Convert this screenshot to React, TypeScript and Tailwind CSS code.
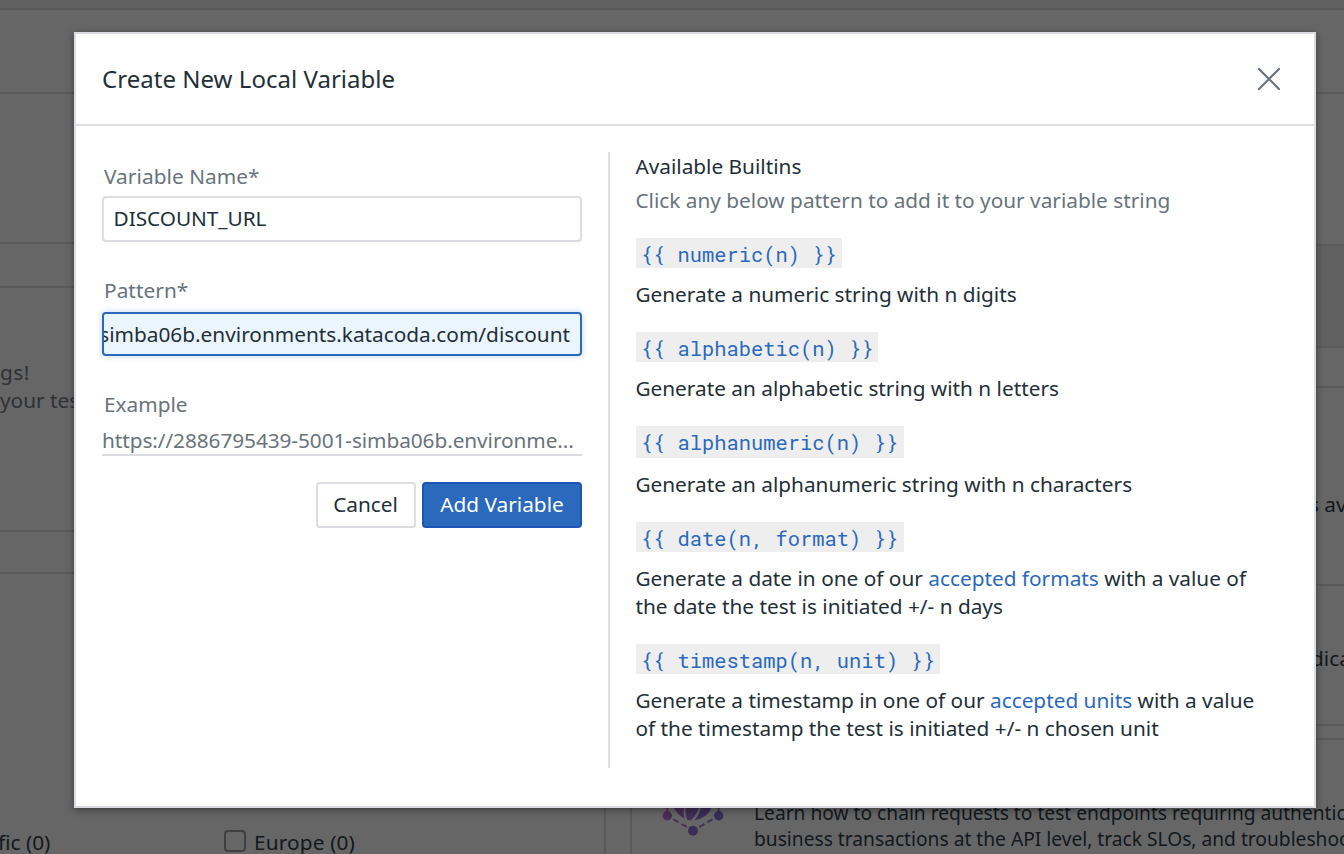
import type { ReactNode } from "react";

function Link({ children }: { children: ReactNode }) {
  return <a href="#" className="text-[#2a69bc]">{children}</a>;
}

const builtins: { pattern: string; text: ReactNode; row: string; tag: string }[] = [
  { pattern: "{{ numeric(n) }}", text: "Generate a numeric string with n digits", row: "h-[94px]", tag: "w-[206px] h-[30px]" },
  { pattern: "{{ alphabetic(n) }}", text: "Generate an alphabetic string with n letters", row: "h-[94px]", tag: "w-[242px] h-[30px]" },
  { pattern: "{{ alphanumeric(n) }}", text: "Generate an alphanumeric string with n characters", row: "h-24", tag: "w-[268px] h-8" },
  {
    pattern: "{{ date(n, format) }}",
    text: <>Generate a date in one of our <Link>accepted formats</Link> with a value of<br />the date the test is initiated +/- n days</>,
    row: "h-[122px]",
    tag: "w-[268px] h-[30px]",
  },
  {
    pattern: "{{ timestamp(n, unit) }}",
    text: <>Generate a timestamp in one of our <Link>accepted units</Link> with a value<br />of the timestamp the test is initiated +/- n chosen unit</>,
    row: "h-[122px]",
    tag: "w-[304px] h-[30px]",
  },
];

function Backdrop() {
  return (
    <div className="flex h-full flex-col text-[#12181c]">
      <div className="h-[10px] shrink-0 border-b-2 border-[#595959] bg-[#616161]" />
      <div className="h-[84px] shrink-0 border-b-2 border-[#595959]" />
      <div className="flex min-h-0 flex-1">
        <div className="flex w-[606px] shrink-0 flex-col overflow-hidden border-r-2 border-[#595959]">
          <div className="h-[150px] shrink-0 border-b-2 border-[#595959]" />
          <div className="h-11 shrink-0 border-b-2 border-[#595959]" />
          <div className="h-[244px] shrink-0 border-b-2 border-[#595959] pt-[70px] leading-7 text-[#2e3134]">
            <p className="tracking-[0.5px]">gs!</p>
            <p>your tests</p>
          </div>
          <div className="h-[42px] shrink-0 border-b-2 border-[#595959]" />
          <div className="flex pt-[254px] leading-7">
            <p className="-ml-[2px] w-[226px] shrink-0 whitespace-nowrap">fic (0)</p>
            <div className="mt-[2px] mr-2 size-[22px] rounded border-2 border-[#404040]" />
            <p className="tracking-[0.15px]">Europe (0)</p>
          </div>
        </div>
        <div className="ml-6 flex min-w-0 flex-1 flex-col overflow-hidden border-l-2 border-[#595959] whitespace-nowrap">
          <div className="h-[150px] shrink-0" />
          <div className="h-[104px] shrink-0 border-y-2 border-[#5c5c5c] bg-[#616161]" />
          <div className="h-10 shrink-0 border-b-2 border-[#595959]" />
          <div className="h-[198px] shrink-0 border-b-2 border-[#595959] pt-[102px] pl-[677px] leading-7">s available</div>
          <div className="h-[140px] shrink-0 border-b-2 border-[#595959] pt-[58px] pl-[679px] leading-7">dicated</div>
          <div className="h-[14px] shrink-0 border-b-2 border-[#595959]" />
          <div className="flex pt-[26px] pl-[28px]">
            <svg className="shrink-0" width="66" height="72" viewBox="0 0 66 72">
              <defs>
                <linearGradient id="bulb" gradientUnits="userSpaceOnUse" x1="7" y1="0" x2="59" y2="0">
                  <stop offset="0" stopColor="#4b2d55" />
                  <stop offset="1" stopColor="#372e58" />
                </linearGradient>
              </defs>
              <path
                fill="url(#bulb)"
                d="M24 42Q23 48 24.500 52.500Q17 49 13 40Q9 26 25 16ZM25.500 42Q25 49 27.500 54L31 54.200Q37 49 39.500 40L38 16H27ZM41.500 40Q39 49 34.500 54Q47 53 52.500 40Q56 26 40 16Z"
              />
              <g fill="none" stroke="url(#bulb)" strokeWidth="1.800">
                <path d="M7.300 18Q7.500 34 7.300 49.700" />
                <path d="M58.600 18Q58.800 34 58.600 49.700" />
                <path d="M7.300 49.700L33 64.700" strokeDasharray="6 3.500" strokeDashoffset="-7" />
                <path d="M58.600 49.700L33 64.700" strokeDasharray="6 3.500" strokeDashoffset="-7" />
              </g>
              <circle cx="7.300" cy="49.700" r="4.700" fill="#4b2d55" />
              <circle cx="58.700" cy="49.700" r="4.700" fill="#372e58" />
              <circle cx="33" cy="64.700" r="4.900" fill="#3a2e59" />
            </svg>
            <p className="ml-[28px] pt-[34px] text-[19.2px] leading-[26px]">
              Learn how to chain requests to test endpoints requiring authentication
              <br />
              business transactions at the API level, track SLOs, and troubleshoot
            </p>
          </div>
        </div>
      </div>
    </div>
  );
}

export default function App() {
  return (
    <div className="relative h-[854px] w-[1344px] overflow-hidden bg-[#666] font-['Noto_Sans',sans-serif] text-[20.8px]">
      <Backdrop />
      <div className="absolute top-8 left-[74px] flex h-[776px] w-[1242px] flex-col border-2 border-[#dcdce3] bg-white text-[#232f38] shadow-[0_2px_8px_rgba(0,0,0,0.4)]">
        <header className="flex h-[92px] shrink-0 items-center justify-between border-b-2 border-[#dcdce3] pr-[33px] pl-[26px]">
          <h1 className="text-2xl leading-8 tracking-[0.03px]">Create New Local Variable</h1>
          <button aria-label="Close">
            <svg width="24" height="24" viewBox="0 0 24 24" fill="none" stroke="#69737b" strokeWidth="2.200" strokeLinecap="round">
              <path d="M2 2l20 20M22 2L2 22" />
            </svg>
          </button>
        </header>
        <div className="flex px-[26px] pt-[26px] leading-7">
          <form className="w-[480px] shrink-0 pt-[10px]">
            <label className="block pl-[2px] text-[#69737b] tracking-[0.06px]">Variable Name*</label>
            <div className="mt-[6px] flex h-[46px] items-center rounded border-2 border-[#dcdce3] px-[9.5px] pb-[2px] tracking-[-0.04px]">DISCOUNT_URL</div>
            <label className="mt-[34px] block pl-[2px] text-[#69737b] tracking-[0.06px]">Pattern*</label>
            <div className="mt-2 flex h-11 items-center justify-end overflow-hidden rounded border-2 border-[#2a69bc] bg-[#ebf5fd] pr-[10px] shadow-[0_0_6px_rgba(42,105,188,0.3)]">
              <span className="whitespace-nowrap">simba06b.environments.katacoda.com/discount</span>
            </div>
            <label className="mt-[34px] block pl-[2px] text-[#69737b]">Example</label>
            <p className="mt-2 h-[30px] border-b-2 border-[#dcdce3] text-[#69737b] tracking-[-0.07px]">https://2886795439-5001-simba06b.environme...</p>
            <div className="mt-[26px] flex justify-end gap-[6px]">
              <button type="button" className="h-[46px] w-[100px] rounded border-2 border-[#dcdce3] pr-[1px] pb-[2px]">Cancel</button>
              <button type="button" className="h-[46px] w-40 rounded border-2 border-[#1d55b5] bg-[#2a69bc] pb-[2px] text-white">Add Variable</button>
            </div>
          </form>
          <section className="ml-[26px] h-[616px] flex-1 border-l-2 border-[#dcdce3] pl-[25.4px]">
            <h2>Available Builtins</h2>
            <p className="mt-[6px] mb-6 text-[#69737b]">Click any below pattern to add it to your variable string</p>
            {builtins.map((b) => (
              <div key={b.pattern} className={b.row}>
                <button className={`mb-3 ml-[0.6px] flex items-start bg-[#eeeeee] pt-[3px] pl-[4.6px] text-left font-['Roboto_Mono','Liberation_Mono',monospace] text-[20.4px] leading-7 tracking-[0.03px] whitespace-pre text-[#2a69bc] ${b.tag}`}>{b.pattern}</button>
                <p className="whitespace-nowrap">{b.text}</p>
              </div>
            ))}
          </section>
        </div>
      </div>
    </div>
  );
}
